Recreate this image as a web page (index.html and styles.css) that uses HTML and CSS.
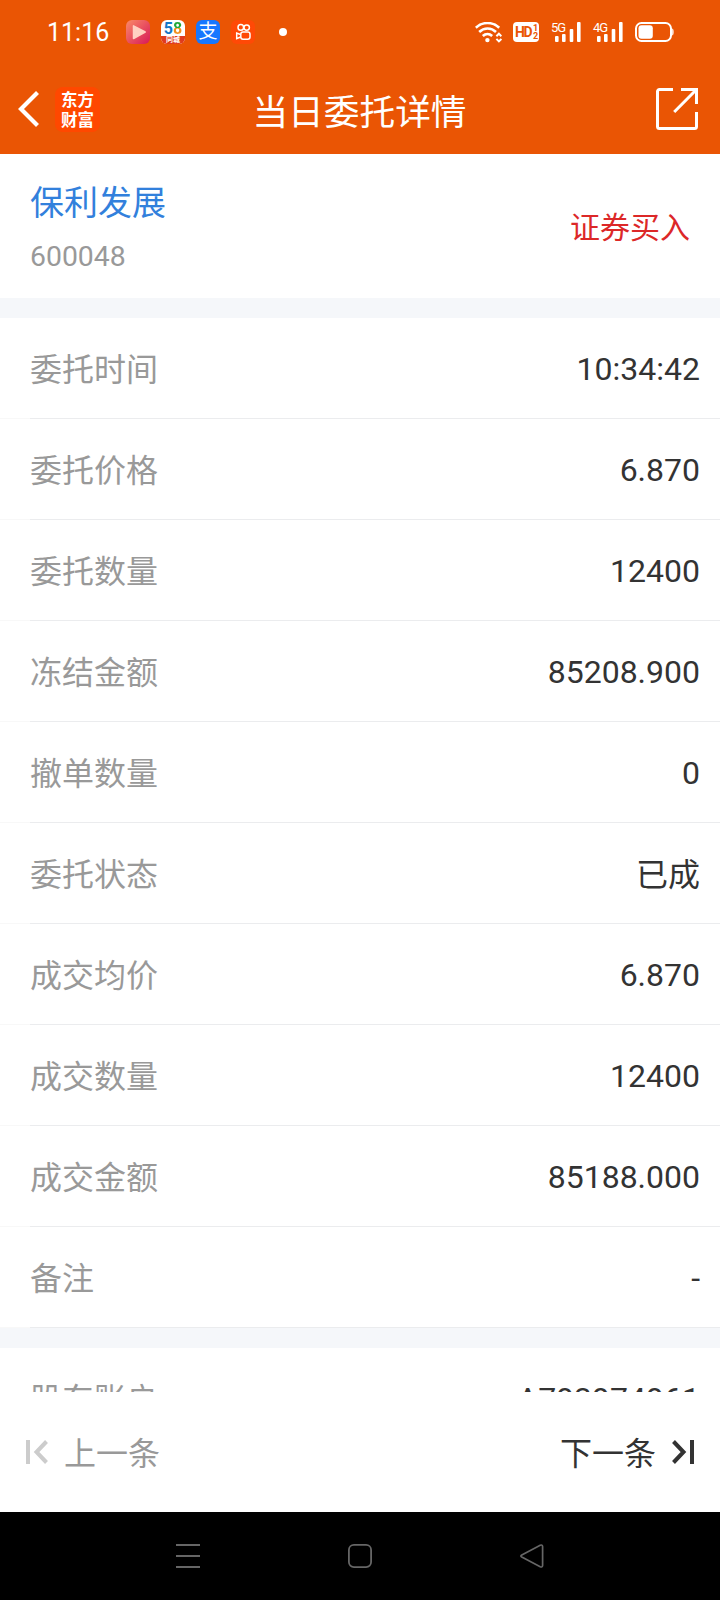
FILE: index.html
```html
<!DOCTYPE html>
<html lang="zh-CN">
<head>
  <meta charset="UTF-8">
  <meta name="viewport" content="width=device-width, initial-scale=1.0">
  <title>当日委托详情</title>
  <link rel="stylesheet" href="styles.css">
</head>
<body>
  <div class="page">
    <header class="header">
      <div class="status-bar">
        <span class="clock">11:16</span>
        <div class="app-icons">
          <svg width="24" height="24" viewBox="0 0 24 24">
            <defs>
              <linearGradient id="play" x1="0" y1="0" x2="1" y2="1">
                <stop offset="0" stop-color="#fa8a68"/>
                <stop offset="1" stop-color="#d81858"/>
              </linearGradient>
            </defs>
            <rect width="24" height="24" rx="6" fill="url(#play)"/>
            <path d="M7.5 5.8v12.8L19.2 12z" fill="#ffd0c2" stroke="#ffd0c2" stroke-width="1.5" stroke-linejoin="round"/>
          </svg>
          <div class="icon-58">
            <div class="digits"><span class="five">5</span><span class="eight">8</span></div>
            <div class="strip">同城</div>
          </div>
          <div class="icon-pay">支</div>
          <svg width="24" height="24" viewBox="0 0 24 24" fill="none" stroke="#fff" stroke-width="1.5">
            <rect width="24" height="24" rx="6" fill="#ff4906" stroke="none"/>
            <circle cx="9.8" cy="7.4" r="2.8"/>
            <circle cx="15.7" cy="7.6" r="2.7"/>
            <rect x="9.8" y="12" width="9.2" height="7.3" rx="2.2"/>
            <path d="M9.5 14.5L5.7 13v5.6l3.8-1.6"/>
          </svg>
        </div>
        <span class="dot"></span>
        <div class="signals">
          <svg class="wifi" width="27" height="21" viewBox="0 0 27 21" fill="none" stroke="#fff" stroke-width="2.6">
            <path d="M.8 5.7C7.5-.5 17.5-.5 24.2 5.7"/>
            <path d="M4.2 10C9 5.4 16.2 5.4 21 10"/>
            <path d="M7.8 14C10.6 11.4 14.4 11.4 17.2 14"/>
            <circle cx="12.4" cy="18.1" r="2.2" fill="#fff" stroke="none"/>
            <path d="M21.4 14.2l2.5-2.5 2.5 2.5M21.4 16.9l2.5 2.5 2.5-2.5" stroke-width="2"/>
          </svg>
          <div class="hd">HD<span class="hd-nums"><i>1</i><i>2</i></span></div>
          <div class="cell">
            <span>5G</span>
            <svg width="30" height="20" viewBox="0 0 30 20" fill="#fff">
              <rect x="4" y="14" width="3.6" height="6" rx="1"/>
              <rect x="11" y="12" width="3.6" height="8" rx="1"/>
              <rect x="18.7" y="7" width="3.6" height="13" rx="1"/>
              <rect x="26" y="0" width="3.6" height="20" rx="1"/>
            </svg>
          </div>
          <div class="cell">
            <span>4G</span>
            <svg width="30" height="20" viewBox="0 0 30 20" fill="#fff">
              <rect x="4" y="14" width="3.6" height="6" rx="1"/>
              <rect x="11" y="12" width="3.6" height="8" rx="1"/>
              <rect x="18.7" y="7" width="3.6" height="13" rx="1"/>
              <rect x="26" y="0" width="3.6" height="20" rx="1"/>
            </svg>
          </div>
          <svg width="39" height="20" viewBox="0 0 39 20">
            <rect x="1" y="1" width="35" height="18" rx="5.5" fill="none" stroke="#fff" stroke-width="2"/>
            <rect x="3.5" y="3.2" width="14.3" height="13.6" rx="3" fill="#fff"/>
            <path d="M37.2 6.5c1.2.6 1.4 1.4 1.4 3.5s-.2 2.9-1.4 3.5z" fill="#fff"/>
          </svg>
        </div>
      </div>

      <div class="title-bar">
        <svg class="back" width="22" height="38" viewBox="0 0 22 38" fill="none" stroke="#fff" stroke-width="4.2">
          <path d="M20.5 2.5L4 19l16.5 16.5"/>
        </svg>
        <div class="logo">东方<br>财富</div>
        <h1>当日委托详情</h1>
        <svg class="share" width="42" height="42" viewBox="0 0 42 42" fill="none" stroke="#fff" stroke-width="3">
          <path d="M17 1.5H3.5a2 2 0 0 0-2 2v35a2 2 0 0 0 2 2h35a2 2 0 0 0 2-2V24"/>
          <path d="M25 1.5h15.5V16M40 2L18.2 24"/>
        </svg>
      </div>
    </header>

    <section class="stock">
      <div>
        <div class="stock-name">保利发展</div>
        <div class="stock-code">600048</div>
      </div>
      <div class="trade-type">证券买入</div>
    </section>

    <main class="details">
      <div class="row"><span class="label">委托时间</span><span class="value">10:34:42</span></div>
      <div class="row"><span class="label">委托价格</span><span class="value">6.870</span></div>
      <div class="row"><span class="label">委托数量</span><span class="value">12400</span></div>
      <div class="row"><span class="label">冻结金额</span><span class="value">85208.900</span></div>
      <div class="row"><span class="label">撤单数量</span><span class="value">0</span></div>
      <div class="row"><span class="label">委托状态</span><span class="value text">已成</span></div>
      <div class="row"><span class="label">成交均价</span><span class="value">6.870</span></div>
      <div class="row"><span class="label">成交数量</span><span class="value">12400</span></div>
      <div class="row"><span class="label">成交金额</span><span class="value">85188.000</span></div>
      <div class="row"><span class="label">备注</span><span class="value">-</span></div>
      <div class="gap"></div>
      <div class="row"><span class="label">股东账户</span><span class="value">A793974961</span></div>
    </main>

    <footer class="pager">
      <div class="prev">
        <svg width="22" height="24" viewBox="0 0 22 24" fill="none" stroke="#ccc" stroke-width="4">
          <path d="M2 0v24M20.5 1.5L10.5 12l10 10.5"/>
        </svg>
        <span>上一条</span>
      </div>
      <div class="next">
        <span>下一条</span>
        <svg width="22" height="24" viewBox="0 0 22 24" fill="none" stroke="#333" stroke-width="4">
          <path d="M20 0v24M1.5 1.5L11.5 12l-10 10.5"/>
        </svg>
      </div>
    </footer>

    <nav class="nav-bar">
      <svg width="24" height="24" viewBox="0 0 24 24" stroke="#666" stroke-width="2">
        <path d="M0 1h24M0 12h24M0 23h24"/>
      </svg>
      <svg width="24" height="24" viewBox="0 0 24 24" fill="none" stroke="#666" stroke-width="1.8">
        <rect x=".9" y=".9" width="22.2" height="22.2" rx="5"/>
      </svg>
      <svg width="24" height="24" viewBox="0 0 24 24" fill="none" stroke="#666" stroke-width="1.7">
        <path d="M1.8 10.9L20.2 1.2q2.2-.8 2.4 1.3v19q-.2 2.1-2.4 1.3L1.8 13.1q-1.8-1.1 0-2.2z"/>
      </svg>
    </nav>
  </div>
</body>
</html>
```
FILE: styles.css
```css
* {
  box-sizing: border-box;
}
body {
  margin: 0;
  font-family: Roboto, "Noto Sans CJK SC", sans-serif;
  color: #333;
  background: #fff;
}
svg {
  display: block;
  flex-shrink: 0;
}
.page {
  display: flex;
  flex-direction: column;
  width: 720px;
  height: 1600px;
  overflow: hidden;
}

/* header */
.header {
  height: 154px;
  flex-shrink: 0;
  background: #ea5504;
  color: #fff;
}
.status-bar {
  display: flex;
  align-items: center;
  height: 64px;
  padding: 0 46px 0 47px;
}
.clock {
  width: 79px;
  font-size: 25px;
}
.app-icons {
  display: flex;
  gap: 11px;
}
.icon-58,
.icon-pay {
  width: 24px;
  height: 24px;
  border-radius: 6px;
  text-align: center;
}
.icon-58 {
  background: #fff;
}
.digits {
  display: flex;
  justify-content: center;
  height: 16px;
  font-size: 16px;
  line-height: 18px;
  font-weight: 700;
}
.five {
  color: #1478c8;
}
.eight {
  background: linear-gradient(#22a838 50%, #f0901e 50%);
  -webkit-background-clip: text;
  color: transparent;
}
.strip {
  height: 8px;
  border-radius: 0 0 6px 6px;
  font-size: 7px;
  line-height: 8px;
  font-weight: 700;
  color: #fff;
  background: #e03c1e;
}
.icon-pay {
  background: #1677ff;
  font-size: 19px;
  line-height: 23px;
}
.dot {
  width: 8px;
  height: 8px;
  margin-left: 24px;
  border-radius: 50%;
  background: #fff;
}
.signals {
  display: flex;
  align-items: center;
  margin-left: auto;
}
.hd {
  display: flex;
  align-items: center;
  width: 26px;
  height: 20px;
  margin-left: 11px;
  padding-left: 2px;
  border-radius: 4px;
  background: #fff;
  color: #ea5504;
  font-size: 14px;
  font-weight: 700;
  letter-spacing: -1.5px;
}
.hd-nums {
  display: flex;
  flex-direction: column;
  margin-left: 2px;
  font-size: 9px;
  line-height: 8px;
}
.hd-nums i {
  font-style: normal;
}
.cell {
  position: relative;
  margin-left: 12px;
}
.cell span {
  position: absolute;
  left: 0;
  top: 0;
  font-size: 13px;
  line-height: 12px;
  letter-spacing: -1px;
}
.cell + svg {
  margin-left: 12px;
}
.title-bar {
  display: flex;
  align-items: center;
  height: 90px;
  padding: 0 22px 0 17px;
}
.logo {
  width: 45px;
  height: 45px;
  margin-left: 16px;
  padding-top: 2px;
  border-radius: 8px;
  background: #ff4800;
  font-family: "Noto Sans CJK SC", sans-serif;
  font-size: 16.5px;
  line-height: 20px;
  font-weight: 700;
  text-align: center;
}
.title-bar h1 {
  flex: 1;
  margin: 7px 0 0 -42px;
  padding-left: 5px;
  font-size: 35.7px;
  line-height: 44px;
  font-weight: 400;
  text-align: center;
}

/* stock summary */
.stock {
  display: flex;
  justify-content: space-between;
  align-items: center;
  flex-shrink: 0;
  height: 144px;
  padding: 2px 30px 0;
}
.stock-name {
  font-size: 34px;
  line-height: 50px;
  color: #3280dc;
}
.stock-code {
  margin-top: 9px;
  font-size: 28.4px;
  line-height: 40px;
  color: #999;
}
.trade-type {
  padding-bottom: 5px;
  font-size: 30px;
  color: #dc2828;
}

/* order details */
.details {
  flex: 1;
  min-height: 0;
  overflow: hidden;
  border-top: 20px solid #f5f7fa;
}
.row {
  display: flex;
  justify-content: space-between;
  align-items: center;
  height: 101px;
  padding: 0 20px 0 30px;
  font-size: 32px;
  background: linear-gradient(to right, #f8f8f8 30px, #ebecee 30px) bottom / 100% 1px no-repeat;
}
.label {
  padding-bottom: 4px;
  color: #999;
}
.value {
  padding-top: 1px;
}
.text {
  padding: 0 0 4px;
}
.gap {
  height: 20px;
  background: #f5f7fa;
}

/* previous / next */
.pager {
  display: flex;
  justify-content: space-between;
  align-items: center;
  flex-shrink: 0;
  height: 120px;
  padding: 0 26px 1px;
  font-size: 32px;
}
.pager span {
  padding-bottom: 2px;
}
.prev,
.next {
  display: flex;
  align-items: center;
}
.prev {
  gap: 16px;
  color: #999;
}
.next {
  gap: 16px;
}

/* system navigation */
.nav-bar {
  display: flex;
  justify-content: center;
  align-items: center;
  gap: 148px;
  flex-shrink: 0;
  height: 88px;
  background: #000;
}
```
